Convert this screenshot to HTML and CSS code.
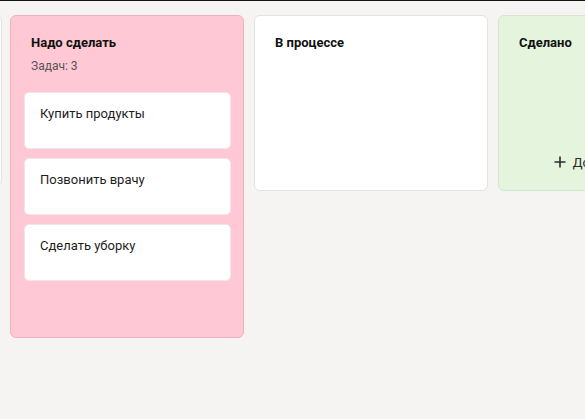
FILE: index.html
```html
<!DOCTYPE html>
<html lang="ru">
<head>
<meta charset="utf-8">
<title>Доска задач</title>
<link rel="stylesheet" href="styles.css">
</head>
<body>
<div class="topline"></div>
<div class="board">
  <section class="column column--plain column--stub" aria-hidden="true"></section>
  <section class="column column--pink">
    <header class="column-head">
      <h2 class="column-title">Надо сделать</h2>
      <p class="column-meta">Задач: 3</p>
    </header>
    <div class="column-list">
      <div class="card">Купить продукты</div>
      <div class="card">Позвонить врачу</div>
      <div class="card">Сделать уборку</div>
    </div>
    <div class="column-foot"></div>
  </section>
  <section class="column column--plain">
    <header class="column-head">
      <h2 class="column-title">В процессе</h2>
    </header>
  </section>
  <section class="column column--green">
    <header class="column-head">
      <h2 class="column-title">Сделано</h2>
    </header>
    <button class="add-btn">
      <svg class="add-icon" viewBox="0 0 12 12" width="12" height="12" aria-hidden="true"><path d="M6 0.5V11.5M0.5 6H11.5" stroke="#2b2b2b" stroke-width="1.6" fill="none"/></svg>
      <span>Добавить задачу</span>
    </button>
  </section>
</div>
</body>
</html>
```
FILE: styles.css
```css
html, body {
  margin: 0;
  padding: 0;
}
body {
  background: #f5f4f2;
  font-family: Roboto, "Noto Sans", Arial, sans-serif;
  color: #1a1a1a;
  overflow: hidden;
  height: 419px;
}
.topline {
  height: 1px;
  background: #141414;
}
.board {
  display: flex;
  align-items: flex-start;
  gap: 10px;
  padding-top: 14px;
  margin-left: -232px;
}
.column {
  flex: 0 0 234px;
  box-sizing: border-box;
  min-height: 176px;
  border: 1px solid #e3e3e3;
  border-radius: 6px;
  padding: 13px 12px 13px 13px;
  display: flex;
  flex-direction: column;
  background: #fff;
}
.column--stub {
  min-height: 172px;
  margin-right: -2px;
  background: #fbfbfa;
}
.column--pink {
  background: #ffc8d4;
  border-color: #efb3c0;
}
.column--green {
  background: #e4f4dd;
  border-color: #d5e6cd;
}
.column-head {
  padding: 6px 7px;
}
.column-title {
  margin: 0;
  font-size: 13px;
  line-height: 16px;
  font-weight: 700;
  color: #111;
}
.column-meta {
  margin: 7px 0 0;
  font-size: 12px;
  line-height: 16px;
  color: #555;
}
.column-list {
  display: flex;
  flex-direction: column;
  gap: 9px;
  margin-top: 12px;
}
.card {
  box-sizing: border-box;
  min-height: 57px;
  background: #fff;
  border: 1px solid #f1e6e8;
  border-radius: 5px;
  padding: 13px 15px;
  font-size: 13px;
  line-height: 16px;
  color: #1d1d1d;
}
.column-foot {
  height: 31px;
  margin-top: 12px;
}
.add-btn {
  margin-top: auto;
  height: 30px;
  border: 0;
  padding: 0;
  background: transparent;
  display: flex;
  align-items: center;
  justify-content: center;
  gap: 7px;
  font-family: Roboto, "Noto Sans", Arial, sans-serif;
  font-size: 13px;
  color: #2b2b2b;
  cursor: pointer;
}
.add-icon {
  flex: none;
}
```
